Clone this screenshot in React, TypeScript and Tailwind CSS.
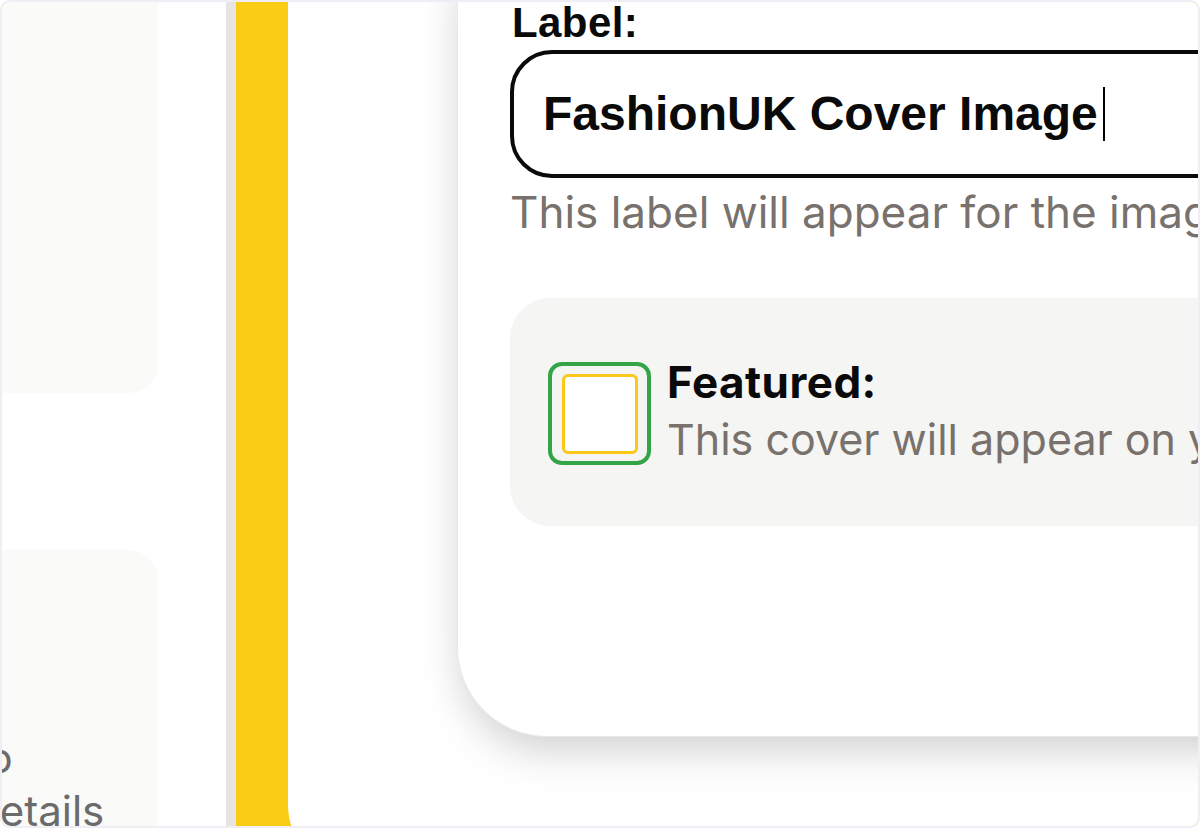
import React from "react";

const inter = { fontFamily: "Inter, 'Noto Sans', sans-serif" };
const arial = { fontFamily: "'Liberation Sans', Arial, sans-serif" };

function SidePanel() {
  return (
    <div className="flex w-[156px] shrink-0 flex-col justify-between">
      <div className="-mt-[40px] h-[431px] rounded-br-[28px] bg-[#fafaf9]" />
      <div
        className="h-[276px] overflow-hidden rounded-tr-[30px] bg-[#fafaf9] pt-[181px] text-[42px] leading-[53px] text-[#6b6b6b]"
        style={inter}
      >
        <div className="-ml-[65px] whitespace-nowrap">Info</div>
        <div className="-ml-[28px] whitespace-nowrap">details</div>
      </div>
    </div>
  );
}

function FeaturedToggle() {
  return (
    <div className="mt-[64px] flex items-start gap-[16px] rounded-[40px] bg-[#f5f5f4] pt-[62px] pb-[61px] pl-[38px]">
      <div className="mt-[2px] flex h-[103px] w-[103px] shrink-0 items-center justify-center rounded-[14px] border-[4px] border-[#33a546] bg-[#f4f4f3]">
        <div className="h-[80px] w-[76px] rounded-[6px] border-[3px] border-[#fcc81a] bg-white" />
      </div>
      <div className="flex flex-col" style={inter}>
        <div className="text-[44px] leading-none font-bold tracking-[0.01em] text-[#0a0a0a]">Featured:</div>
        <div className="mt-[14px] whitespace-nowrap text-[43px] leading-none text-[#78716c]">
          This cover will appear on your profile
        </div>
      </div>
    </div>
  );
}

function EditCard() {
  return (
    <div className="-mt-[42px] ml-[169px] w-[900px] shrink-0 rounded-bl-[90px] border-l border-b border-[#e9e9e9] bg-white pt-[42px] pb-[210px] pl-[52px] shadow-[0_22px_45px_-8px_rgba(0,0,0,0.16),0_0_40px_rgba(0,0,0,0.05)]">
      <label
        className="block pl-[2px] text-[42px] leading-none font-bold tracking-[0.01em] text-[#0a0a0a]"
        style={arial}
      >
        Label:
      </label>
      <div className="mt-[6px] flex h-[128px] items-center rounded-[42px] border-[4px] border-[#0a0a0a] pl-[29px]">
        <span className="text-[48px] leading-none font-bold whitespace-nowrap text-[#0a0a0a]" style={arial}>
          FashionUK Cover Image
        </span>
        <span className="ml-[5px] h-[54px] w-[2px] bg-black" />
      </div>
      <p className="mt-[12px] whitespace-nowrap text-[44px] leading-none text-[#78716c]" style={inter}>
        This label will appear for the image in your gallery
      </p>
      <FeaturedToggle />
    </div>
  );
}

export default function App() {
  return (
    <div className="flex h-[828px] w-[1200px] overflow-hidden rounded-[10px] border-2 border-[#efeef4] bg-white">
      <SidePanel />
      <div className="ml-[68px] w-[10px] shrink-0 bg-[#e6e5e3]" />
      <div className="flex min-w-0 flex-1 items-start bg-[#facc15] pl-[52px]">
        <div className="flex h-[871px] min-w-0 flex-1 items-start rounded-bl-[68px] bg-white">
          <EditCard />
        </div>
      </div>
    </div>
  );
}
